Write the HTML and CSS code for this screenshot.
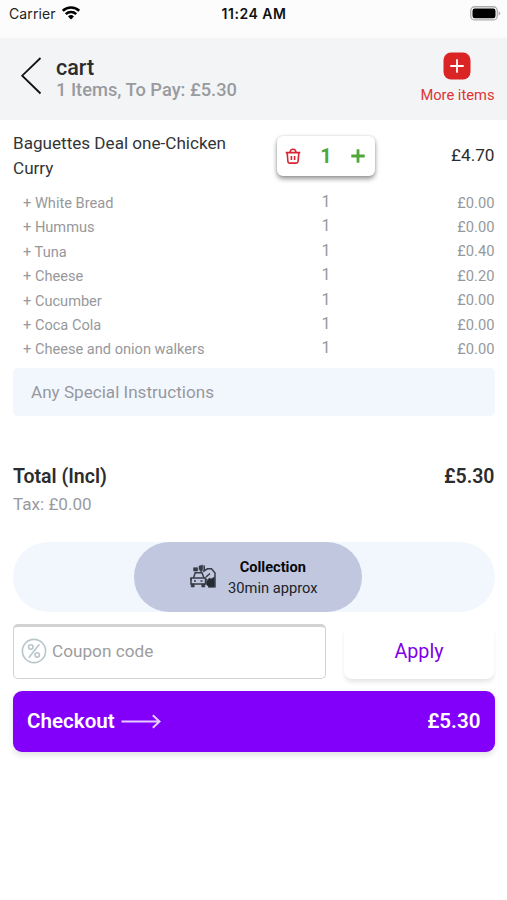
FILE: index.html
```html
<!DOCTYPE html>
<html lang="en">
<head>
<meta charset="utf-8">
<title>cart</title>
<link rel="stylesheet" href="styles.css">
</head>
<body>
<div class="status">
  <div class="carrier"><span>Carrier</span>
    <svg width="18" height="14" viewBox="0 0 18 14"><g fill="none" stroke="#000" stroke-width="2.5"><path d="M.8 4.8C5.2.3 12.8.3 17.2 4.8"/><path d="M3.8 8.1C6.6 5.3 11.4 5.3 14.2 8.1"/></g><path d="M6 10.4Q9 7.8 12 10.4L9 13.5Z"/></svg>
  </div>
  <time class="clock">11:24 AM</time>
  <svg class="battery" width="31" height="15" viewBox="0 0 31 15"><rect x=".75" y=".75" width="26.5" height="13.2" rx="4" fill="#fff" stroke="#aaa" stroke-width="1.3"/><rect x="2.5" y="2.5" width="23" height="9.7" rx="2.2"/><path d="M28.6 5.2Q30.2 6 30.2 7.4T28.6 9.6Z" fill="#aaa"/></svg>
</div>
<header class="header">
  <svg class="back" width="22" height="38" viewBox="0 0 22 38"><path d="M20.5 1L2.2 18.7L20.5 36.5" fill="none" stroke="#111" stroke-width="1.8"/></svg>
  <div class="heading"><h1>cart</h1><p>1 Items, To Pay: £5.30</p></div>
  <div class="more">
    <svg width="28" height="28" viewBox="0 0 28 28"><rect x=".5" y=".5" width="27" height="27" rx="7.5" fill="#db2424"/><path d="M14 7.3V20.7M7.3 14H20.7" stroke="#fff" stroke-width="1.8"/></svg>
    <span>More items</span>
  </div>
</header>
<main>
  <section class="item">
    <h2>Baguettes Deal one-Chicken Curry</h2>
    <div class="stepper">
      <svg width="16" height="16" viewBox="0 0 16 16" fill="none" stroke="#d92332" stroke-width="1.6"><path d="M.7 4.6H15.3M2.2 5L2.9 13.2Q3.1 15.1 4.9 15.1H11.1Q12.9 15.1 13.1 13.2L13.8 5M5 4.4C5.2 2.4 6.2 1.2 8 1.2S10.8 2.4 11 4.4M6.4 8V12M9.6 8V12"/></svg>
      <b>1</b>
      <svg width="14" height="14" viewBox="0 0 14 14"><path d="M7 .3V13.7M.3 7H13.7" stroke="#51a638" stroke-width="2.8"/></svg>
    </div>
    <span class="price">£4.70</span>
  </section>
  <ul class="options">
    <li><span>+ White Bread</span><i>1</i><em>£0.00</em></li>
    <li><span>+ Hummus</span><i>1</i><em>£0.00</em></li>
    <li><span>+ Tuna</span><i>1</i><em>£0.40</em></li>
    <li><span>+ Cheese</span><i>1</i><em>£0.20</em></li>
    <li><span>+ Cucumber</span><i>1</i><em>£0.00</em></li>
    <li><span>+ Coca Cola</span><i>1</i><em>£0.00</em></li>
    <li><span>+ Cheese and onion walkers</span><i>1</i><em>£0.00</em></li>
  </ul>
  <div class="notes"><span>Any Special Instructions</span></div>
  <div class="total"><span>Total (Incl)</span><span>£5.30</span></div>
  <p class="tax"><span>Tax: £0.00</span></p>
  <div class="delivery">
    <div class="collection">
      <svg width="28" height="25" viewBox="0 0 28 25" fill="none" stroke="#383c46" stroke-width="1.5"><path d="M4.5 14L6.2 8.7H13L15 14M2 14H16.5V20H2ZM1 15.5H3M16 15.5H18M5 17H7M11.5 17H13.5"/><path d="M2.2 20H5.2V23H2.2ZM12.8 20H15.8V23H12.8ZM4.6 3.7H8.6V7H4.6Z" fill="#383c46" stroke-width=".6"/><path d="M10 2L13.8 1V5L12.8 7.5H11.5L10 5Z" fill="#383c46" stroke-width=".5"/><path d="M15.2 1.5V7M14 7.5L18.5 4.8H22.5L26 9V22.7H19"/><path d="M17.5 17L20.5 14L22 15L25.5 13V23H20L17.5 20.5Z" fill="#262a32" stroke-width=".7"/><path d="M17 13L21 9.5"/></svg>
      <div><strong>Collection</strong><span>30min approx</span></div>
    </div>
  </div>
  <div class="coupon-row">
    <div class="coupon">
      <svg width="26" height="26" viewBox="0 0 26 26" fill="none" stroke="#b8c5ca" stroke-width="1.6"><circle cx="13" cy="13" r="11.6"/><path d="M18.3 6.3L7.8 19.7"/><circle cx="9.8" cy="9" r="2.2"/><circle cx="16.2" cy="17" r="2.2"/></svg>
      <span>Coupon code</span>
    </div>
    <div class="apply"><span>Apply</span></div>
  </div>
  <div class="checkout">
    <span class="go">Checkout</span>
    <svg width="40" height="15" viewBox="0 0 40 15"><path d="M.5 7.5H38.5M31.8 1.3L38.5 7.5L31.8 13.7" fill="none" stroke="#fff" stroke-opacity=".8" stroke-width="2"/></svg>
    <span class="sum">£5.30</span>
  </div>
</main>
</body>
</html>
```
FILE: styles.css
```css
* { box-sizing: border-box; }
body { margin: 0; height: 900px; background: #fff; color: #2b2c2e; font-family: Roboto, "Liberation Sans", sans-serif; overflow: hidden; }
h1, h2, p, ul { margin: 0; padding: 0; }
svg { display: block; flex: none; }
span, b, strong, h1, p { white-space: nowrap; }

.status { height: 38px; padding: 5px 6px 0 9px; background: #fcfcfc; display: grid; grid-template-columns: 1fr auto 1fr; align-items: start; font-family: Inter, Roboto, sans-serif; line-height: 18px; }
.carrier { display: flex; gap: 6px; font-size: 14px; letter-spacing: .1px; color: #222; }
.carrier svg { margin-top: 1px; }
.clock { margin-right: 2px; font-size: 14px; letter-spacing: .5px; font-weight: 600; color: #111; }
.battery { justify-self: end; margin-top: 1px; }

.header { height: 82px; padding: 0 12.5px 0 20px; background: #f3f4f6; display: flex; }
.back { margin-top: 19px; }
.heading { margin: 18px auto 0 14px; }
h1 { font-size: 21.5px; line-height: 24px; font-weight: 500; }
.heading p { font-size: 18.3px; line-height: 20px; font-weight: 500; color: #999b9f; }
.more { margin-top: 14px; display: flex; flex-direction: column; align-items: center; color: #dc3434; font-size: 14.7px; line-height: 20px; }
.more span { margin-top: 5px; }

main { padding: 11px 12.5px 0 13px; }
.item { height: 60px; display: grid; grid-template-columns: 264px 98px 1fr; }
h2 { width: 230px; font-size: 17.1px; line-height: 24.5px; font-weight: 400; color: #333437; }
.stepper { height: 40px; margin-top: 5px; padding: 0 10px 0 8px; border-radius: 6px; background: #fff; box-shadow: 0 3px 5px #0006, 0 0 3px #0002; display: flex; align-items: center; justify-content: space-between; color: #51a638; font-size: 20px; }
.stepper b { font-weight: 700; }
.price { text-align: right; font-size: 17.2px; line-height: 24px; margin-top: 12px; }

.options { list-style: none; font-size: 14.6px; color: #97989b; }
.options li { height: 24.4px; line-height: 24px; padding-left: 10px; display: grid; grid-template-columns: 286px 34px 1fr; }
.options i { font-style: normal; text-align: center; margin-top: -1px; font-size: 16px; }
.options em { font-style: normal; text-align: right; font-size: 14.7px; margin-top: -.4px; }

.notes { height: 48px; margin-top: 6px; padding-left: 18px; border-radius: 5px; background: #f2f7fe; color: #96999f; font-size: 17.1px; line-height: 48px; }
.total { margin-top: 48px; display: flex; justify-content: space-between; font-size: 19.5px; line-height: 25px; font-weight: 600; }
.tax { margin-top: 3px; font-size: 17.1px; line-height: 24px; color: #999b9f; }

.delivery { height: 70px; margin-top: 26px; padding-left: 121px; border-radius: 35px; background: #f2f7fe; }
.collection { width: 228px; height: 70px; padding-left: 55px; border-radius: 35px; background: #c0c7de; display: flex; align-items: center; gap: 11px; color: #202228; font-size: 14.7px; line-height: 21px; }
.collection div { margin-top: 2px; display: flex; flex-direction: column; align-items: center; }
.collection strong { font-size: 14.6px; color: #08090b; }

.coupon-row { height: 55px; margin-top: 12px; display: grid; grid-template-columns: 313px 150px; gap: 18px; }
.coupon { padding: 0 0 2px 7px; border: 1px solid #d2d2d4; border-top: 3px solid #d2d2d2; border-radius: 5px; display: flex; align-items: center; gap: 5px; color: #9c9da0; font-size: 17.2px; }
.apply { border-radius: 8px; background: #fff; box-shadow: 0 4px 5px -1px #0000001c; display: flex; align-items: center; justify-content: center; color: #8000e8; font-size: 19.7px; }
.checkout { height: 61px; margin-top: 12px; padding: 0 14px; border-radius: 9px; background: #8200fa; box-shadow: 0 3px 6px #00000020; display: flex; align-items: center; gap: 6px; color: #fff; font-size: 20.6px; font-weight: 600; }
.sum { margin-left: auto; }
```
